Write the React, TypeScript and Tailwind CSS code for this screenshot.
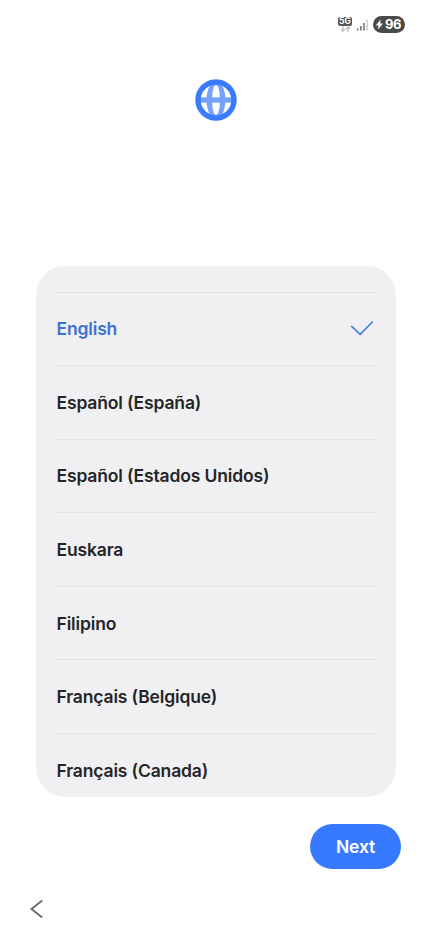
import React, { useState } from 'react';

const LANGUAGES = [
  { code: 'en', label: 'English' },
  { code: 'es-ES', label: 'Español (España)' },
  { code: 'es-US', label: 'Español (Estados Unidos)' },
  { code: 'eu', label: 'Euskara' },
  { code: 'fil', label: 'Filipino' },
  { code: 'fr-BE', label: 'Français (Belgique)' },
  { code: 'fr-CA', label: 'Français (Canada)' },
];

const StatusBar = () => (
  <div className="flex h-[49px] items-center justify-end pr-[27.5px]">
    <div className="flex w-[14px] flex-col items-center">
      <span className="flex h-[9px] w-[14px] items-center justify-center rounded-[2px] bg-[#555555] text-[8.5px] font-bold leading-none text-white">
        5G
      </span>
      <svg width="11" height="6" viewBox="0 0 11 6" fill="none" stroke="#a3a3a3" strokeWidth="1">
        <path d="M3 0.3v5M0.8 3.1L3 5.3l2.2-2.2M8 5.8v-5M5.8 3L8 0.8 10.2 3" />
      </svg>
    </div>
    <svg className="ml-[5px]" width="11" height="12" viewBox="0 0 11 12">
      <path d="M0 9.5h1.4v2H0zM3.2 7h1.4v4.5H3.2zM6.3 4h1.4v7.5H6.3z" fill="#636363" />
      <path d="M9.4 0.5h1.4v11H9.4z" fill="#c9c9c9" />
    </svg>
    <div className="ml-[5px] flex h-[17px] w-[31.5px] items-center justify-center gap-[1.5px] rounded-full bg-[#4a4a4a] text-white">
      <svg width="7" height="9" viewBox="0 0 7 9" fill="currentColor">
        <path d="M4.4 0L0.2 5.2h2.5L2.2 9l4.4-5.3H4z" stroke="currentColor" strokeWidth="0.4" />
      </svg>
      <span className="text-[13px] font-bold leading-none tracking-[-0.4px]">96</span>
    </div>
  </div>
);

const GlobeIcon = () => (
  <svg width="42" height="42" viewBox="0 0 42 42">
    <circle cx="21" cy="21" r="18" fill="#fff" />
    <ellipse cx="21" cy="21" rx="9.4" ry="19" fill="#76a1ff" />
    <ellipse cx="21" cy="21" rx="4" ry="15" fill="#fff" />
    <path d="M5 18.3h32v5.4H5z" fill="#76a1ff" />
    <circle cx="21" cy="21" r="18" fill="none" stroke="#3b7bfb" strokeWidth="5.4" />
  </svg>
);

export default function App() {
  const [selected, setSelected] = useState('en');

  return (
    <div className="flex h-[936px] w-[432px] flex-col overflow-hidden bg-white font-['Inter','Roboto',sans-serif]">
      <StatusBar />

      <header className="flex h-[216.5px] justify-center pt-[30px]">
        <GlobeIcon />
      </header>

      <ul className="mx-9 h-[531px] shrink-0 overflow-hidden rounded-[29px] bg-[#f0f0f2] px-[18px] pt-[26px]">
        {LANGUAGES.map(({ code, label }) => (
          <li key={code} className="h-[73.6px] border-t border-[#e3e3e5]">
            <button
              onClick={() => setSelected(code)}
              className={`flex h-full w-full items-center justify-between pl-[2.5px] pr-[5px] text-left text-[17.5px] font-[560] tracking-[-0.15px] ${
                selected === code ? 'text-[#3e72d2]' : 'text-[#252527]'
              }`}
            >
              <span className="pt-px">{label}</span>
              {selected === code && (
                <svg width="22" height="15" viewBox="0 0 22 15" fill="none" stroke="#4a80dc" strokeWidth="1.7">
                  <path d="M0.7 5.3L9.2 13.4 21.3 1" strokeLinecap="round" strokeLinejoin="round" />
                </svg>
              )}
            </button>
          </li>
        ))}
      </ul>

      <div className="flex justify-end pr-[31px] pt-[27px]">
        <button className="h-[45.5px] w-[91px] rounded-full bg-[#387aff] pt-px text-[17.5px] font-[560] tracking-[-0.15px] text-white">
          Next
        </button>
      </div>

      <nav className="flex pl-[29px] pt-[30px]">
        <button aria-label="Back">
          <svg width="15" height="20" viewBox="0 0 15 20" fill="none" stroke="#6b6b6b" strokeWidth="1.9">
            <path d="M13.2 1.5L2.5 10l10.7 8.5" />
          </svg>
        </button>
      </nav>
    </div>
  );
}
